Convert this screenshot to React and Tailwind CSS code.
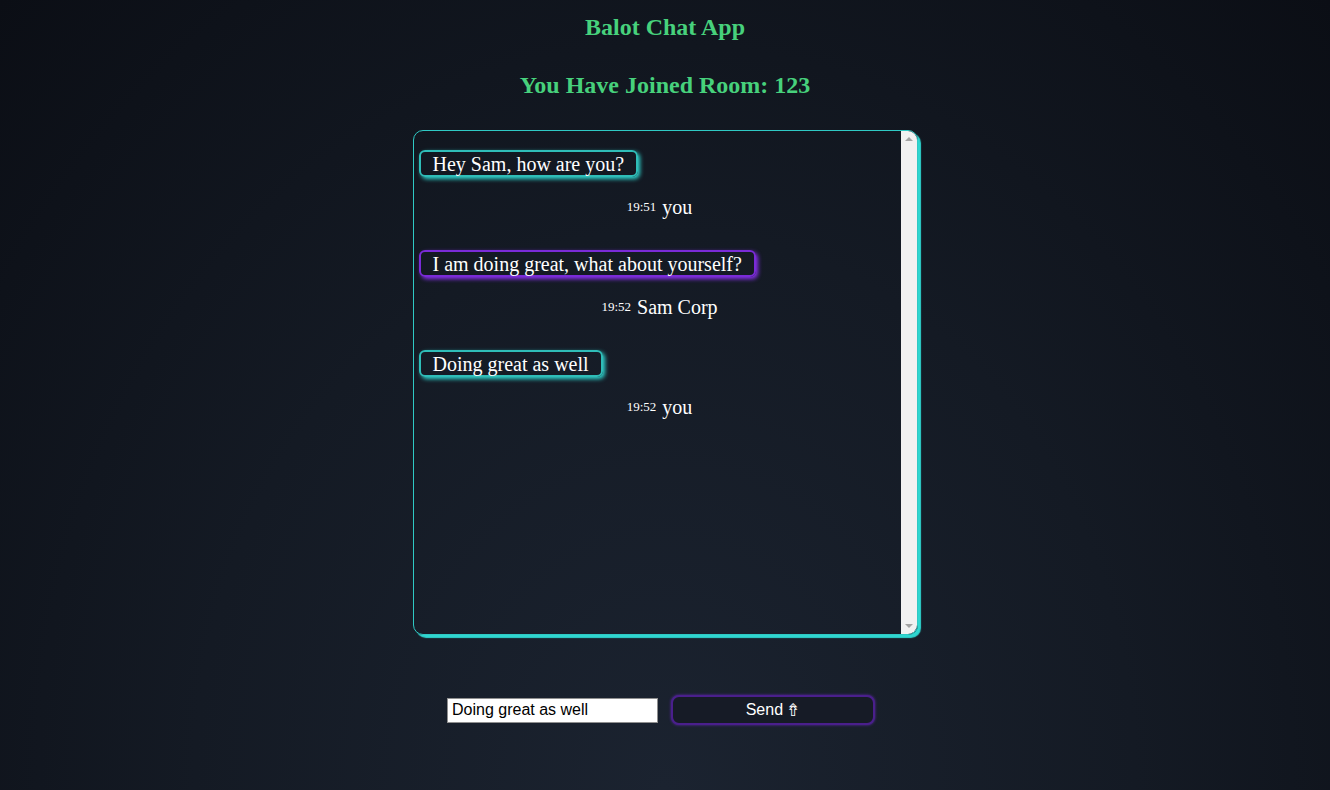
import React from "react";

const messages = [
  { text: "Hey Sam, how are you?", time: "19:51", author: "you", mine: true },
  { text: "I am doing great, what about yourself?", time: "19:52", author: "Sam Corp", mine: false },
  { text: "Doing great as well", time: "19:52", author: "you", mine: true },
];

export default function App() {
  return (
    <div className="min-h-[790px] w-full bg-[radial-gradient(ellipse_at_bottom,#1b2330_0%,#141a24_50%,#0b0e15_100%)] flex flex-col items-center font-['Liberation_Serif',serif]">
      <h1 className="mt-[13px] text-[24px] leading-[28px] font-bold text-[#47d17c]">Balot Chat App</h1>
      <h2 className="mt-[30px] text-[24px] leading-[28px] font-bold text-[#47d17c]">You Have Joined Room: 123</h2>

      <div className="mt-[31px] w-[505px] h-[505px] border border-[#2fc9c4] rounded-[10px] shadow-[3px_3px_1px_#2fd6d0] flex overflow-hidden">
        <div className="flex-1 flex flex-col pt-[19px] pl-[5px]">
          {messages.map((m, i) => (
            <div key={i} className="flex flex-col h-[100px]">
              <div className="flex">
                <div
                  className={
                    "h-[27px] flex items-center px-[12px] rounded-[6px] border-2 text-white text-[20px] leading-none " +
                    (m.mine
                      ? "border-[#2fbdb8] shadow-[2px_2px_4px_#2fd6d0]"
                      : "border-[#7a2bd8] shadow-[2px_2px_4px_#8a30f0]")
                  }
                >
                  {m.text}
                </div>
              </div>
              <div className="mt-[18px] h-[24px] flex items-center justify-center gap-[6px] text-white">
                <span className="text-[13px]">{m.time}</span>
                <span className="text-[20px]">{m.author}</span>
              </div>
            </div>
          ))}
        </div>
        <div className="w-[16px] bg-[#f1f1f1] flex flex-col justify-between items-center py-[6px]">
          <div className="w-0 h-0 border-l-[4px] border-r-[4px] border-b-[4px] border-l-transparent border-r-transparent border-b-[#a3a3a3]" />
          <div className="w-0 h-0 border-l-[4px] border-r-[4px] border-t-[4px] border-l-transparent border-r-transparent border-t-[#a3a3a3]" />
        </div>
      </div>

      <div className="mt-[60px] pr-[8px] flex items-center gap-[13px] font-['Liberation_Sans',Arial,sans-serif]">
        <input
          defaultValue="Doing great as well"
          className="w-[211px] h-[25px] bg-white border border-[#8f8f8f] px-[4px] text-[16px] text-black outline-none"
        />
        <button className="w-[204px] h-[30px] rounded-[8px] border-2 border-[#4a1f8c] shadow-[0_0_3px_#5b2aa8] bg-[#161b26] text-white text-[16px] flex items-center justify-center gap-[3px]">
          <span>Send</span>
          <span className="font-['DejaVu_Sans',sans-serif] text-[17px] leading-none">⇮</span>
        </button>
      </div>
    </div>
  );
}
